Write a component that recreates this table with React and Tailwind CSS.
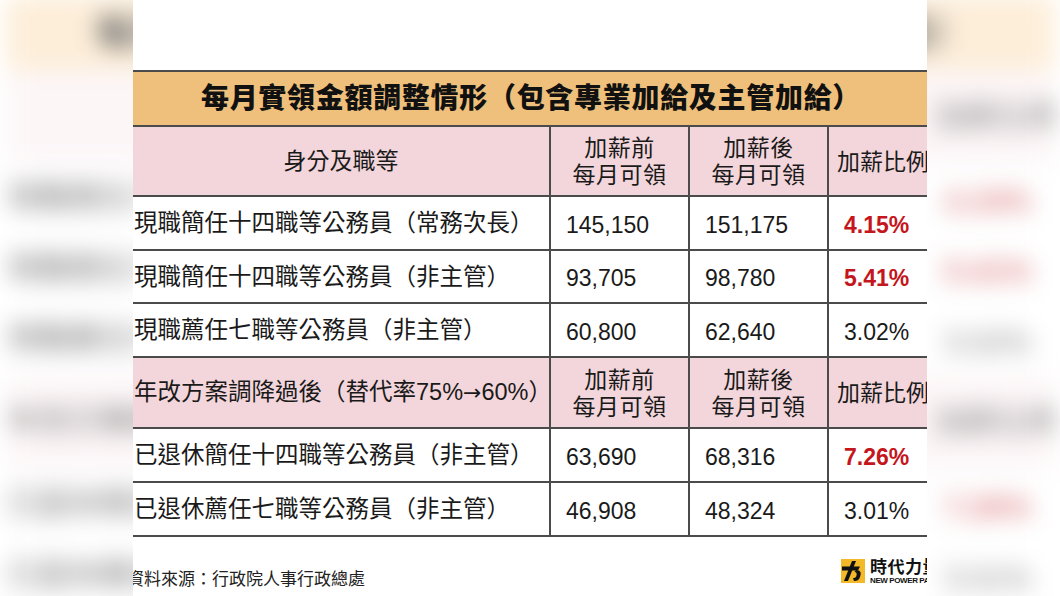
const rowsTop = [
  { label: "現職簡任十四職等公務員（常務次長）", before: "145,150", after: "151,175", rate: "4.15%", hot: true, h: "h-[54px]" },
  { label: "現職簡任十四職等公務員（非主管）", before: "93,705", after: "98,780", rate: "5.41%", hot: true, h: "h-[53px]" },
  { label: "現職薦任七職等公務員（非主管）", before: "60,800", after: "62,640", rate: "3.02%", hot: false, h: "h-[54px]" },
];

const rowsBottom = [
  { label: "已退休簡任十四職等公務員（非主管）", before: "63,690", after: "68,316", rate: "7.26%", hot: true, h: "h-[54px]" },
  { label: "已退休薦任七職等公務員（非主管）", before: "46,908", after: "48,324", rate: "3.01%", hot: false, h: "h-[54px]" },
];

// colours of the sharp picture and of its washed-out copy in the background
const tones = {
  sharp: { line: "border-[#4b4b4b]", pink: "bg-[#f3d6db]", band: "bg-[#efc07b]" },
  ghost: { line: "border-transparent", pink: "bg-[#fbf1f3]", band: "bg-[#fce3c0]" },
};

const cols = "grid grid-cols-[416px_139px_139px_1fr] border-b-2";

function HeadRow({ label, h, center, t }) {
  return (
    <div className={`${cols} ${t.line} ${h} ${t.pink} text-[23px]`}>
      <div className={`flex items-center whitespace-nowrap ${center ? "justify-center" : "pl-[1px] text-[23.5px]"}`}>{label}</div>
      <div className={`flex flex-col items-center justify-center border-l-2 ${t.line} pt-[2px] leading-[27px] tracking-[0.5px]`}>
        <span>加薪前</span>
        <span>每月可領</span>
      </div>
      <div className={`flex flex-col items-center justify-center border-l-2 ${t.line} pt-[2px] leading-[27px] tracking-[0.5px]`}>
        <span>加薪後</span>
        <span>每月可領</span>
      </div>
      <div className={`flex items-center whitespace-nowrap border-l-2 ${t.line} pl-[8px] pt-[2px]`}>加薪比例</div>
    </div>
  );
}

function DataRow({ row, t }) {
  return (
    <div className={`${cols} ${t.line} ${row.h} bg-white text-[23px]`}>
      <div className="flex items-center whitespace-nowrap pl-[1px] pt-[2px] text-[23.5px]">{row.label}</div>
      <div className={`flex items-center border-l-2 ${t.line} pl-[15px] pt-[4px]`}>{row.before}</div>
      <div className={`flex items-center border-l-2 ${t.line} pl-[15px] pt-[4px]`}>{row.after}</div>
      <div className={`flex items-center border-l-2 ${t.line} pl-[15px] pt-[4px] ${row.hot ? "font-bold text-[#c4161c]" : ""}`}>{row.rate}</div>
    </div>
  );
}

function Logo() {
  return (
    <div className="flex items-start gap-[5px]">
      <svg width="24" height="24" viewBox="0 0 24 24">
        <rect width="24" height="24" fill="#f3b928" />
        <path d="M1 7.5 H19 L17 11.5 H1 Z" fill="#111" />
        <path d="M11 2 L15 2 L7 22 L3 22 Z" fill="#111" />
        <path d="M15 11 C20 11 20.5 14 19 18 C18 21 16 22 13 22 L12 19 C14 19 15 18.5 15.5 16.5 C16 14.5 15.5 13 13.5 13 Z" fill="#111" />
      </svg>
      <div className="flex flex-col leading-none">
        <span className="whitespace-nowrap text-[17px] font-bold tracking-[0.5px] text-[#111]">時代力量</span>
        <span className="mt-[1px] whitespace-nowrap text-[8px] font-bold tracking-[-0.4px] text-[#111]">NEW POWER PARTY</span>
      </div>
    </div>
  );
}

function Sheet({ t }) {
  return (
    <main className="flex h-[596px] w-[794px] shrink-0 flex-col overflow-hidden bg-white">
      <div className="h-[70px] shrink-0" />
      <div className={`flex h-[57px] items-center justify-center border-y-2 ${t.line} ${t.band} pl-[2px] text-[28px] font-black tracking-[0.7px] text-[#111]`}>
        每月實領金額調整情形（包含專業加給及主管加給）
      </div>
      <HeadRow label="身分及職等" h="h-[70px]" center t={t} />
      {rowsTop.map((row) => <DataRow key={row.label} row={row} t={t} />)}
      <HeadRow
        label={<>年改方案調降過後（替代率75%<span className="font-['DejaVu_Sans'] text-[22px]">→</span>60%）</>}
        h="h-[71px]"
        t={t}
      />
      {rowsBottom.map((row) => <DataRow key={row.label} row={row} t={t} />)}
      <div className="grid flex-1 grid-cols-[708px_1fr] pt-[22px]">
        <p className="ml-[-6px] mt-[8px] whitespace-nowrap text-[17px] text-[#222]">資料來源：行政院人事行政總處</p>
        <Logo />
      </div>
    </main>
  );
}

export default function App() {
  return (
    <div className="relative h-[596px] w-[1060px] overflow-hidden bg-white font-['Liberation_Sans','Noto_Sans_CJK_TC',sans-serif] text-[#1a1a1a]">
      {/* blurred, enlarged copy behind the picture */}
      <div aria-hidden="true" className="absolute inset-0 flex origin-[529px_303px] scale-[1.32] justify-center opacity-60 blur-[9px]">
        <Sheet t={tones.ghost} />
      </div>
      <div className="relative flex justify-center">
        <Sheet t={tones.sharp} />
      </div>
    </div>
  );
}
